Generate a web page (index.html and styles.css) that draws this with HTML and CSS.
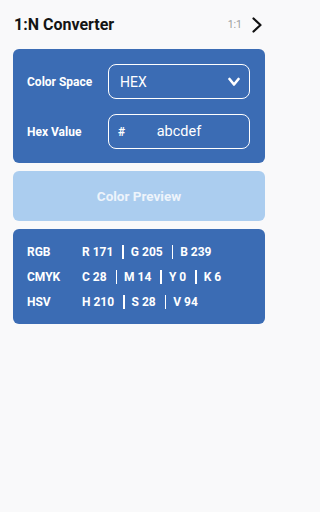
FILE: index.html
```html
<!DOCTYPE html>
<html>
<head>
<meta charset="utf-8">
<link rel="stylesheet" href="styles.css">
</head>
<body>
<header class="topbar">
  <h1 class="title">1:N Converter</h1>
  <div class="mode">
    <span class="mode-label">1:1</span>
    <svg class="mode-arrow" width="12" height="16" viewBox="0 0 12 16"><path d="M2.5 1.5 L9.5 8 L2.5 14.5" fill="none" stroke="#111" stroke-width="2.2" stroke-linecap="round" stroke-linejoin="round"/></svg>
  </div>
</header>
<main class="content">
  <section class="card input-card">
    <div class="field-row">
      <span class="field-label">Color Space</span>
      <div class="field select">
        <span class="select-value">HEX</span>
        <svg class="select-arrow" width="12" height="10" viewBox="0 0 12 10"><path d="M1.5 2 L6 7.5 L10.5 2" fill="none" stroke="#fff" stroke-width="2.6" stroke-linecap="round" stroke-linejoin="round"/></svg>
      </div>
    </div>
    <div class="field-row">
      <span class="field-label">Hex Value</span>
      <div class="field hex">
        <span class="hash">#</span>
        <span class="hex-value">abcdef</span>
      </div>
    </div>
  </section>
  <div class="preview">Color Preview</div>
  <section class="card result-card">
    <div class="result-row">
      <span class="result-label">RGB</span>
      <span class="vals"><span>R 171</span><i class="sep"></i><span>G 205</span><i class="sep"></i><span>B 239</span></span>
    </div>
    <div class="result-row">
      <span class="result-label">CMYK</span>
      <span class="vals"><span>C 28</span><i class="sep"></i><span>M 14</span><i class="sep"></i><span>Y 0</span><i class="sep"></i><span>K 6</span></span>
    </div>
    <div class="result-row">
      <span class="result-label">HSV</span>
      <span class="vals"><span>H 210</span><i class="sep"></i><span>S 28</span><i class="sep"></i><span>V 94</span></span>
    </div>
  </section>
</main>
</body>
</html>
```
FILE: styles.css
```css
html, body {
  margin: 0;
  padding: 0;
  background: #f9f9fa;
}
body {
  width: 278px;
  height: 512px;
  font-family: Roboto, "Liberation Sans", sans-serif;
  color: #111;
}
.topbar {
  height: 49px;
  display: flex;
  align-items: center;
  justify-content: space-between;
  padding: 0 15px 0 14px;
  box-sizing: border-box;
}
.title {
  margin: 0;
  font-size: 16px;
  font-weight: 700;
  color: #141414;
}
.mode {
  display: flex;
  align-items: center;
  gap: 9px;
}
.mode-label {
  font-size: 10.5px;
  color: #9c9c9c;
}
.mode-arrow {
  display: block;
}
.content {
  padding: 0 13px;
  display: flex;
  flex-direction: column;
  gap: 8px;
}
.card {
  background: #3b6cb4;
  border-radius: 6px;
  color: #fff;
}
.input-card {
  padding: 15px 15px 14px 14px;
  display: flex;
  flex-direction: column;
  gap: 15px;
}
.field-row {
  display: flex;
  align-items: center;
}
.field-label {
  width: 81px;
  flex: none;
  font-size: 12px;
  font-weight: 700;
}
.field {
  flex: 1;
  height: 35px;
  box-sizing: border-box;
  border: 1.5px solid #fff;
  border-radius: 8px;
  display: flex;
  align-items: center;
}
.select {
  padding: 0 9px 0 11px;
  justify-content: space-between;
}
.select-value {
  font-size: 14px;
}
.select-arrow {
  display: block;
}
.hex {
  position: relative;
  justify-content: center;
}
.hash {
  position: absolute;
  left: 9px;
  font-size: 12px;
  font-weight: 700;
}
.hex-value {
  font-size: 14.5px;
}
.preview {
  height: 50px;
  background: #abcdef;
  border-radius: 6px;
  display: flex;
  align-items: center;
  justify-content: center;
  font-size: 13.5px;
  font-weight: 700;
  color: #eef4fb;
}
.result-card {
  padding: 10px 14px;
}
.result-row {
  display: flex;
  align-items: center;
  height: 25px;
  font-size: 12px;
  font-weight: 700;
}
.result-label {
  width: 55px;
  flex: none;
}
.vals {
  display: flex;
  align-items: center;
}
.sep {
  display: block;
  width: 1.5px;
  height: 14px;
  background: #fff;
  margin: 0 7px 0 9px;
}
```
